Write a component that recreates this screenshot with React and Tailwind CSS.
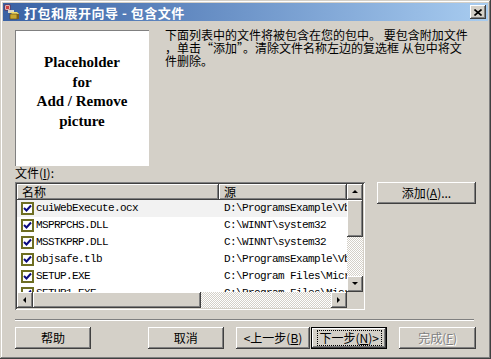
import React from "react";

const cjk = "font-['SimSun','Noto_Sans_CJK_SC',sans-serif]";
const mono = "font-['Liberation_Mono','Noto_Sans_CJK_SC',monospace]";

const raised =
  "bg-[#d4d0c8] shadow-[inset_-1px_-1px_#404040,inset_1px_1px_#ffffff,inset_-2px_-2px_#808080,inset_2px_2px_#d4d0c8]";
const sunken =
  "shadow-[inset_1px_1px_#808080,inset_-1px_-1px_#ffffff,inset_2px_2px_#404040,inset_-2px_-2px_#d4d0c8]";
const checker =
  "bg-[repeating-conic-gradient(#ffffff_0_25%,#d4d0c8_0_50%)] bg-size-[2px_2px]";

const files = [
  ["cuiWebExecute.ocx", "D:\\ProgramsExample\\Vb"],
  ["MSPRPCHS.DLL", "C:\\WINNT\\system32"],
  ["MSSTKPRP.DLL", "C:\\WINNT\\system32"],
  ["objsafe.tlb", "D:\\ProgramsExample\\Vb"],
  ["SETUP.EXE", "C:\\Program Files\\Micr"],
  ["SETUP1.EXE", "C:\\Program Files\\Micr"],
];

const Arrow = ({ dir }) => {
  const pts = {
    up: "1,5 4,2 7,5",
    down: "1,2 4,5 7,2",
    left: "5,1 2,4 5,7",
    right: "2,1 5,4 2,7",
  }[dir];
  return (
    <div className={`${raised} w-[16px] h-[16px] flex items-center justify-center shrink-0`}>
      <svg width="8" height="8" viewBox="0 0 8 8">
        <polygon points={pts} fill="#000" />
      </svg>
    </div>
  );
};

const Check = () => (
  <div className="w-[13px] h-[13px] border-2 border-[#6e6e22] bg-white flex items-center justify-center shrink-0">
    <svg width="9" height="9" viewBox="0 0 9 9">
      <path d="M1 4 L3.5 6.5 L8 1.5" stroke="#0a0a80" strokeWidth="2" fill="none" />
    </svg>
  </div>
);

const Button = ({ children, className = "", isDefault, disabled }) => (
  <div
    className={`${
      isDefault
        ? "bg-[#d4d0c8] border border-black shadow-[inset_-1px_-1px_#404040,inset_1px_1px_#ffffff,inset_-2px_-2px_#808080]"
        : raised
    } h-[22px] flex items-center justify-center text-[12px] ${cjk} ${
      disabled ? "text-[#808080] [text-shadow:1px_1px_#ffffff]" : "text-black"
    } ${className}`}
  >
    {isDefault ? (
      <span className="border border-dotted border-black px-[2px] leading-[14px]">{children}</span>
    ) : (
      children
    )}
  </div>
);

export default function App() {
  return (
    <div
      className={`w-[491px] h-[359px] p-[3px] flex flex-col bg-[#d4d0c8] shadow-[inset_-1px_-1px_#404040,inset_1px_1px_#d4d0c8,inset_-2px_-2px_#808080,inset_2px_2px_#ffffff] ${cjk}`}
    >
      {/* title bar */}
      <div className="h-[18px] flex items-center bg-linear-to-r from-[#3a62a4] to-[#a8ccf0] pl-[1px] pr-[2px]">
        <svg width="17" height="16" viewBox="0 0 17 16" className="shrink-0">
          <rect x="1" y="1" width="5" height="5" fill="#fff" stroke="#800" strokeWidth="0.6" />
          <rect x="2" y="2" width="3" height="3" fill="#d04040" />
          <rect x="4" y="6" width="6" height="3" fill="#dcd8cc" />
          <polygon points="6,8 13,8 15,10 8,10" fill="#f0e070" />
          <rect x="6" y="10" width="7" height="5" fill="#c8a830" stroke="#604010" strokeWidth="0.6" />
          <rect x="13" y="10" width="2" height="5" fill="#806018" />
        </svg>
        <span className="ml-[3px] text-white font-bold text-[13px] leading-none tracking-[0.5px]">
          打包和展开向导 - 包含文件
        </span>
        <div className={`${raised} ml-auto w-[16px] h-[14px] flex items-center justify-center`}>
          <svg width="8" height="7" viewBox="0 0 8 7">
            <path d="M0.5 0.5 L7.5 6.5 M7.5 0.5 L0.5 6.5" stroke="#000" strokeWidth="1.6" />
          </svg>
        </div>
      </div>

      <div className="flex-1 flex flex-col px-[12px]">
        {/* top section */}
        <div className="flex mt-[9px]">
          <div className="w-[134px] h-[136px] bg-white shrink-0 shadow-[inset_1px_1px_#808080,inset_-1px_-1px_#ffffff] flex flex-col items-center pt-[23px] font-['Liberation_Serif',serif] font-bold text-[15px] leading-[19.5px] text-black">
            <span>Placeholder</span>
            <span>for</span>
            <span>Add / Remove</span>
            <span>picture</span>
          </div>
          <div className="ml-[16px] mt-[-2px] text-[12px] leading-[13px] text-black whitespace-nowrap">
            下面列表中的文件将被包含在您的包中。 要包含附加文件
            <br />
            ，单击“添加”。清除文件名称左边的复选框 从包中将文
            <br />
            件删除。
          </div>
        </div>

        <div className="h-[16px] text-[12px] leading-[14px] text-black">
          文件(<u>I</u>):
        </div>

        {/* list + add button */}
        <div className="flex items-start">
          <div className={`${sunken} w-[350px] h-[128px] p-[2px] flex flex-col bg-white shrink-0`}>
            <div className="flex flex-1 min-h-0">
              <div className="flex-1 overflow-hidden flex flex-col">
                <div className="flex h-[16px] shrink-0">
                  <div className={`${raised} w-[202px] shrink-0 text-[12px] leading-[16px] pl-[5px]`}>名称</div>
                  <div className={`${raised} flex-1 text-[12px] leading-[16px] pl-[5px]`}>源</div>
                </div>
                {files.map(([name, src], i) => (
                  <div
                    key={name}
                    className={`flex items-center h-[17px] shrink-0 ${mono} text-[11px] tracking-[-0.6px] text-black ${
                      i === 0 ? "bg-[#f2f2f2]" : "bg-white"
                    }`}
                  >
                    <div className="w-[202px] shrink-0 flex items-center pl-[4px] gap-[2px] overflow-hidden whitespace-nowrap">
                      <Check />
                      <span>{name}</span>
                    </div>
                    <div className="flex-1 pl-[5px] whitespace-nowrap overflow-hidden">{src}</div>
                  </div>
                ))}
              </div>
              <div className="w-[16px] flex flex-col shrink-0">
                <Arrow dir="up" />
                <div className={`${raised} h-[37px] shrink-0`} />
                <div className={`flex-1 ${checker}`} />
                <Arrow dir="down" />
              </div>
            </div>
            <div className="flex h-[16px] shrink-0">
              <Arrow dir="left" />
              <div className={`${raised} w-[168px] shrink-0`} />
              <div className={`flex-1 ${checker}`} />
              <Arrow dir="right" />
              <div className="w-[16px] bg-[#d4d0c8] shrink-0" />
            </div>
          </div>
          <Button className="ml-[12px] w-[99px] h-[19px]">
            添加(<u>A</u>)...
          </Button>
        </div>

        {/* separator */}
        <div className="mt-[9px] h-[2px] border-t border-[#808080] border-b border-b-white mr-[2px]" />

        {/* buttons */}
        <div className="flex mt-[6px]">
          <Button className="w-[76px]">帮助</Button>
          <Button className="w-[76px] ml-[57px]">取消</Button>
          <Button className="w-[75px] ml-[12px]">
            &lt;上一步(<u>B</u>)
          </Button>
          <Button isDefault className="w-[76px] ml-[1px]">
            下一步(<u>N</u>)&gt;
          </Button>
          <Button disabled className="w-[77px] ml-[12px]">
            完成(<u>F</u>)
          </Button>
        </div>
      </div>
    </div>
  );
}
